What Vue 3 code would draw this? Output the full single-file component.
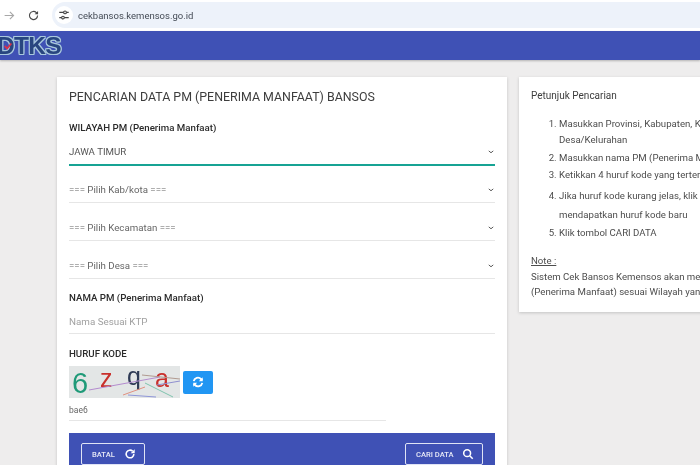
<template>
  <div class="screen">
    <div class="browser-bar">
      <svg class="nav-icon arrow" viewBox="0 0 16 16"><path d="M2 8h11M8.500 3.500 13 8l-4.500 4.500" /></svg>
      <svg class="nav-icon reload" viewBox="0 0 16 16"><path d="M13 8a5 5 0 1 1-1.500-3.600L13 6" /><path class="fill" d="M13.600 2.400v4.200H9.400z" /></svg>
      <div class="url-pill">
        <span class="site-btn">
          <svg viewBox="0 0 14 14"><path d="M1.500 4h5M10 4h2.500M1.500 10H4M7.500 10h5" /><circle cx="8.200" cy="4" r="1.600" /><circle cx="5.800" cy="10" r="1.600" /></svg>
        </span>
        <span class="url">cekbansos.kemensos.go.id</span>
      </div>
    </div>

    <header class="app-header">
      <div class="logo">
        <span>DTKS</span>
        <svg class="logo-check" viewBox="0 0 12 12"><path d="M2 6l3 3 5-6" /></svg>
      </div>
    </header>

    <main class="content">
      <section class="card form-card">
        <h2 class="form-title">PENCARIAN DATA PM (PENERIMA MANFAAT) BANSOS</h2>

        <label class="field-label first">WILAYAH PM (Penerima Manfaat)</label>
        <div
          v-for="(item, i) in pilihan"
          :key="item"
          class="select-row"
          :class="{ active: i === 0 }"
        >
          <span>{{ item }}</span>
          <svg class="caret" viewBox="0 0 8 5"><path d="M1 1l3 2.500L7 1" /></svg>
        </div>

        <label class="field-label nama">NAMA PM (Penerima Manfaat)</label>
        <div class="input-row">Nama Sesuai KTP</div>

        <label class="field-label kode">HURUF KODE</label>
        <div class="captcha-row">
          <svg class="captcha" viewBox="0 0 111 32">
            <rect width="111" height="32" fill="#e3e6e6" />
            <text x="3" y="27" class="ch" fill="#1f9a78" font-size="29">6</text>
            <text x="31" y="21" class="ch" fill="#c9302c" font-size="25">z</text>
            <text x="58" y="19" class="ch" fill="#2e3a55" font-size="25">q</text>
            <text x="86" y="21" class="ch" fill="#c9302c" font-size="25">a</text>
            <path d="M20 24 91 11" stroke="#b48ccf" stroke-width="1" fill="none" />
            <path d="M73 9 111 13" stroke="#b09a90" stroke-width="1" fill="none" />
            <path d="M88 19 111 15" stroke="#8f8fcf" stroke-width="1" fill="none" />
            <path d="M54 29 76 21" stroke="#e09080" stroke-width="1" fill="none" />
            <path d="M76 17 104 31" stroke="#7fc4ae" stroke-width="1" fill="none" />
            <path d="M59 29 87 31" stroke="#8f96d8" stroke-width="1" fill="none" />
          </svg>
          <button class="refresh-btn" type="button">
            <svg viewBox="0 0 14 14"><path d="M2 6a5 5 0 0 1 8.500-2.500L12 5M12 8a5 5 0 0 1-8.500 2.500L2 9" /><path class="fill" d="M12.500 1.500V6H8zM1.500 12.500V8H6z" /></svg>
          </button>
        </div>
        <div class="kode-input">bae6</div>

        <div class="form-footer">
          <button class="outline-btn batal" type="button">
            BATAL
            <svg viewBox="0 0 14 14"><path d="M11.500 7a4.500 4.500 0 1 1-1.400-3.300" /><path class="fill" d="M12.500 1.500V6.200H7.800z" /></svg>
          </button>
          <button class="outline-btn cari" type="button">
            CARI DATA
            <svg viewBox="0 0 14 14"><circle cx="6" cy="6" r="4" /><path d="M9 9l3.500 3.500" /></svg>
          </button>
        </div>
      </section>

      <aside class="card help-card">
        <div class="help-title">Petunjuk Pencarian</div>
        <ol class="help-list">
          <li>Masukkan Provinsi, Kabupaten, Kecamatan dan<br />Desa/Kelurahan</li>
          <li>Masukkan nama PM (Penerima Manfaat)</li>
          <li>Ketikkan 4 huruf kode yang tertera pada gambar</li>
          <li class="tall">Jika huruf kode kurang jelas, klik tombol refresh untuk<br />mendapatkan huruf kode baru</li>
          <li>Klik tombol CARI DATA</li>
        </ol>
        <div class="note-title">Note :</div>
        <p class="note-text">Sistem Cek Bansos Kemensos akan menampilkan data PM<br />(Penerima Manfaat) sesuai Wilayah yang dipilih</p>
      </aside>
    </main>
  </div>
</template>

<script setup>
const pilihan = [
  'JAWA TIMUR',
  '=== Pilih Kab/kota ===',
  '=== Pilih Kecamatan ===',
  '=== Pilih Desa ==='
]
</script>

<style>
html,
body {
  margin: 0;
  overflow: hidden;
}
</style>

<style scoped>
.screen {
  width: 700px;
  height: 465px;
  overflow: hidden;
  background: #eeeded;
  font-family: Roboto, "Liberation Sans", sans-serif;
  color: #555;
  filter: blur(0.3px);
}

.browser-bar {
  height: 31px;
  box-sizing: border-box;
  background: #fff;
  display: flex;
  align-items: center;
  padding-left: 3px;
}

.nav-icon {
  width: 13px;
  height: 13px;
  fill: none;
  stroke-width: 1.400;
}

.arrow {
  stroke: #a8a8a8;
}

.reload {
  margin-left: 11px;
  stroke: #4a4a4a;
}

.reload .fill {
  fill: #4a4a4a;
  stroke: none;
}

.url-pill {
  margin-left: 12px;
  flex: 1;
  height: 26px;
  margin-top: -1px;
  background: #edf2fa;
  border-radius: 13px 0 0 13px;
  display: flex;
  align-items: center;
  padding-left: 3px;
}

.site-btn {
  width: 18px;
  height: 18px;
  border-radius: 50%;
  background: #fff;
  display: flex;
  align-items: center;
  justify-content: center;
}

.site-btn svg {
  width: 12px;
  height: 12px;
  fill: none;
  stroke: #444;
  stroke-width: 1.300;
}

.url {
  margin-left: 5px;
  font-size: 9.500px;
  color: #444b55;
}

.app-header {
  height: 29px;
  background: #3f51b5;
  box-shadow: 0 1px 2px rgba(0, 0, 0, 0.25);
  overflow: hidden;
}

.logo {
  margin-left: -3px;
  width: 70px;
  height: 29px;
  display: flex;
  align-items: center;
  font-family: "Liberation Sans", sans-serif;
  font-weight: 700;
  font-size: 24.500px;
  letter-spacing: -0.700px;
  color: #28467f;
  text-shadow: 1px 0 #a9c8dd, -1px 0 #a9c8dd, 0 1px #a9c8dd, 0 -1px #a9c8dd,
    1px 1px #a9c8dd, -1px 1px #a9c8dd, 1px -1px #a9c8dd, -1px -1px #a9c8dd;
  position: relative;
}

.logo-check {
  position: absolute;
  left: 6px;
  top: 10px;
  width: 10px;
  height: 10px;
  fill: none;
  stroke: #d8324a;
  stroke-width: 2.200;
}

.content {
  display: flex;
  align-items: flex-start;
  gap: 12px;
  margin-top: 17px;
  padding-left: 57px;
}

.card {
  background: #fff;
  box-shadow: 0 1px 3px rgba(0, 0, 0, 0.18);
  flex-shrink: 0;
  box-sizing: border-box;
}

.form-card {
  width: 450px;
  padding: 12px 12px 0;
}

.form-title {
  margin: 0;
  font-size: 12.400px;
  line-height: 16px;
  font-weight: 400;
  color: #3d3d3d;
}

.field-label {
  display: block;
  font-size: 9.700px;
  line-height: 14px;
  font-weight: 500;
  color: #2b2b2b;
}

.field-label.first {
  margin-top: 16px;
}

.select-row {
  height: 38px;
  box-sizing: border-box;
  border-bottom: 1px solid #e6e6e6;
  display: flex;
  align-items: flex-end;
  justify-content: space-between;
  font-size: 9.700px;
  line-height: 12px;
  color: #666;
  padding-bottom: 6px;
}

.select-row.active {
  height: 31px;
  border-bottom: 2px solid #16a394;
  color: #555;
}

.select-row.active + .select-row {
  height: 37px;
}

.caret {
  width: 6px;
  height: 4px;
  margin-bottom: 4px;
  margin-right: 1px;
  fill: none;
  stroke: #555;
  stroke-width: 1.300;
}

.field-label.nama {
  margin-top: 12px;
}

.input-row {
  height: 29px;
  box-sizing: border-box;
  border-bottom: 1px solid #e6e6e6;
  display: flex;
  align-items: flex-end;
  font-size: 9.800px;
  line-height: 12px;
  color: #a0a0a0;
  padding-bottom: 5px;
}

.field-label.kode {
  margin-top: 13px;
}

.captcha-row {
  display: flex;
  align-items: center;
  gap: 3px;
  margin-top: 5px;
}

.captcha {
  width: 111px;
  height: 32px;
  display: block;
}

.ch {
  font-family: "Liberation Sans", sans-serif;
}

.refresh-btn {
  width: 30px;
  height: 23px;
  padding: 0;
  border: none;
  border-radius: 2px;
  background: #2196f3;
  display: flex;
  align-items: center;
  justify-content: center;
}

.refresh-btn svg {
  width: 12px;
  height: 12px;
  fill: none;
  stroke: #fff;
  stroke-width: 2.200;
}

.refresh-btn .fill {
  fill: #fff;
  stroke: none;
}

.kode-input {
  width: 317px;
  height: 23px;
  box-sizing: border-box;
  border-bottom: 1px solid #e6e6e6;
  font-size: 8.500px;
  color: #666;
  padding-top: 7px;
}

.form-footer {
  margin-top: 12px;
  height: 60px;
  background: #3f51b5;
  display: flex;
  justify-content: space-between;
  align-items: flex-start;
  padding: 10px 12px 0;
  box-sizing: border-box;
}

.outline-btn {
  height: 22px;
  box-sizing: border-box;
  border: 1.500px solid #dfe3f5;
  border-radius: 2px;
  background: transparent;
  color: #e6e8f6;
  font-family: Roboto, "Liberation Sans", sans-serif;
  font-size: 7.600px;
  font-weight: 500;
  display: flex;
  align-items: center;
  justify-content: space-between;
  padding: 0 8px 0 10px;
}

.outline-btn svg {
  width: 12px;
  height: 12px;
  fill: none;
  stroke: #fff;
  stroke-width: 1.800;
}

.outline-btn .fill {
  fill: #fff;
  stroke: none;
}

.batal {
  width: 64px;
}

.cari {
  width: 78px;
}

.help-card {
  width: 300px;
  height: 235px;
  padding: 12px 12px;
  font-size: 9.650px;
  color: #4d4d4d;
  white-space: nowrap;
}

.help-title {
  font-size: 10px;
  line-height: 13px;
  color: #3d3d3d;
}

.help-list {
  margin: 14px 0 0;
  padding-left: 28px;
}

.help-list li {
  line-height: 16px;
  margin-bottom: 1.500px;
}

.help-list li.tall {
  line-height: 19px;
  margin-top: 3px;
  margin-bottom: 0.500px;
}

.note-title {
  margin-top: 13.500px;
  margin-bottom: 2px;
  text-decoration: underline;
  line-height: 14px;
}

.note-text {
  margin: 0;
  line-height: 14.500px;
}
</style>
